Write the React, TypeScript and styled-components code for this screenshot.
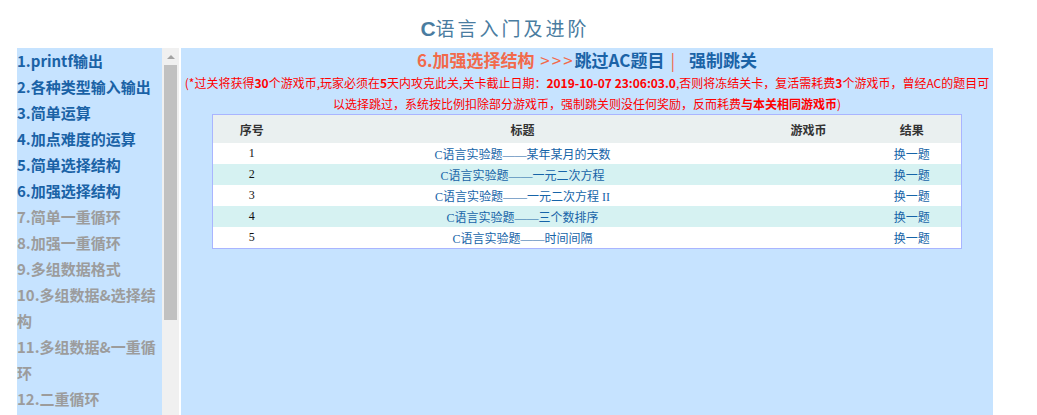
import React from "react";
import styled, { createGlobalStyle } from "styled-components";

const GlobalStyle = createGlobalStyle`
  html, body {
    margin: 0;
    padding: 0;
    overflow: hidden;
    background: #fff;
    font-family: "Noto Sans CJK SC", "Noto Sans", sans-serif;
  }
`;

interface iLevel {
  name: string;
  done: boolean;
}

interface iProblem {
  id: number;
  title: string;
}

const levels: iLevel[] = [
  { name: "1.printf输出", done: true },
  { name: "2.各种类型输入输出", done: true },
  { name: "3.简单运算", done: true },
  { name: "4.加点难度的运算", done: true },
  { name: "5.简单选择结构", done: true },
  { name: "6.加强选择结构", done: true },
  { name: "7.简单一重循环", done: false },
  { name: "8.加强一重循环", done: false },
  { name: "9.多组数据格式", done: false },
  { name: "10.多组数据&选择结构", done: false },
  { name: "11.多组数据&一重循环", done: false },
  { name: "12.二重循环", done: false },
];

const problems: iProblem[] = [
  { id: 1, title: "C语言实验题——某年某月的天数" },
  { id: 2, title: "C语言实验题——一元二次方程" },
  { id: 3, title: "C语言实验题——一元二次方程 II" },
  { id: 4, title: "C语言实验题——三个数排序" },
  { id: 5, title: "C语言实验题——时间间隔" },
];

const App = () => {
  return (
    <Page>
      <GlobalStyle />
      <Title>
        <b>C</b>语言入门及进阶
      </Title>
      <Layout>
        <Sidebar>
          <LevelList>
            {levels.map((lv) => (
              <LevelItem key={lv.name} done={lv.done}>
                {lv.name}
              </LevelItem>
            ))}
          </LevelList>
          <ScrollBar>
            <ScrollArrow />
            <ScrollThumb />
          </ScrollBar>
        </Sidebar>
        <Main>
          <Heading>
            <Current>6.加强选择结构</Current>
            <Arrows> &gt;&gt;&gt;</Arrows>
            <HeadLink>跳过AC题目</HeadLink>
            <Divider>|</Divider>
            <HeadLink>强制跳关</HeadLink>
          </Heading>
          <Notice>
            <NoticeLine>
              (*过关将获得<b>30</b>个游戏币,玩家必须在<b>5</b>天内攻克此关,关卡截止日期：
              <b>2019-10-07 23:06:03.0</b>,否则将冻结关卡，复活需耗费<b>3</b>
              个游戏币，曾经AC的题目可
            </NoticeLine>
            <NoticeLine>
              以选择跳过，系统按比例扣除部分游戏币，强制跳关则没任何奖励，反而耗费
              <b>与本关相同游戏币</b>)
            </NoticeLine>
          </Notice>
          <Table>
            <colgroup>
              <col style={{ width: 78 }} />
              <col style={{ width: 464 }} />
              <col style={{ width: 108 }} />
              <col style={{ width: 99 }} />
            </colgroup>
            <thead>
              <tr>
                <Th>序号</Th>
                <Th>标题</Th>
                <Th>游戏币</Th>
                <Th>结果</Th>
              </tr>
            </thead>
            <tbody>
              {problems.map((p, i) => (
                <Row key={p.id} alt={i % 2 === 1}>
                  <NumCell>{p.id}</NumCell>
                  <LinkCell>{p.title}</LinkCell>
                  <Td></Td>
                  <LinkCell>换一题</LinkCell>
                </Row>
              ))}
            </tbody>
          </Table>
        </Main>
      </Layout>
    </Page>
  );
};

export default App;

const Page = styled.div`
  width: 976px;
  padding-left: 17px;
`;

const Title = styled.div`
  height: 40px;
  padding-top: 8px;
  line-height: 40px;
  text-align: center;
  font-size: 19px;
  letter-spacing: 3px;
  color: #4a7ca0;
  b {
    font-family: "Liberation Sans", Arial, sans-serif;
    font-size: 21px;
    letter-spacing: 0;
  }
`;

const Layout = styled.div`
  display: flex;
  gap: 2px;
  height: calc(100vh - 48px);
`;

const Sidebar = styled.div`
  width: 162px;
  display: flex;
  flex-shrink: 0;
`;

const LevelList = styled.div`
  width: 145px;
  background-color: #c6e3ff;
  overflow: hidden;
`;

const LevelItem = styled.div<{ done: boolean }>`
  font-size: 15px;
  font-weight: 700;
  line-height: 26px;
  color: ${(p) => (p.done ? "#1a62a6" : "#9c9c9c")};
`;

const ScrollBar = styled.div`
  width: 17px;
  background-color: #f0f0f0;
  display: flex;
  flex-direction: column;
  align-items: center;
`;

const ScrollArrow = styled.div`
  height: 17px;
  width: 17px;
  display: flex;
  align-items: center;
  justify-content: center;
  &::after {
    content: "";
    border-left: 4px solid transparent;
    border-right: 4px solid transparent;
    border-bottom: 4px solid #a3a3a3;
  }
`;

const ScrollThumb = styled.div`
  width: 13px;
  height: 255px;
  background-color: #c1c1c1;
`;

const Main = styled.div`
  width: 812px;
  background-color: #c6e3ff;
`;

const Heading = styled.div`
  text-align: center;
  font-size: 17px;
  font-weight: 700;
  line-height: 24px;
  color: #1b63a7;
`;

const Current = styled.span`
  color: #f26a4b;
`;

const Arrows = styled.span`
  color: #f26a4b;
  letter-spacing: 2px;
  font-weight: 400;
`;

const HeadLink = styled.span`
  color: #1b63a7;
`;

const Divider = styled.span`
  color: #f26a4b;
  font-weight: 400;
  margin: 0 14px 0 6px;
`;

const Notice = styled.div`
  color: #ff0000;
  font-size: 12px;
  line-height: 21px;
  text-align: center;
  b {
    font-weight: 700;
  }
`;

const NoticeLine = styled.div`
  white-space: nowrap;
`;

const Table = styled.table`
  width: 749px;
  margin: 0 auto;
  border-collapse: collapse;
  border: 1px solid #a9b5ff;
  table-layout: fixed;
  font-size: 12px;
`;

const Th = styled.th`
  height: 28px;
  padding: 0;
  background-color: #eaf0f0;
  color: #333;
  font-weight: 700;
  text-align: center;
`;

const Row = styled.tr<{ alt: boolean }>`
  background-color: ${(p) => (p.alt ? "#d6f2f2" : "#fff")};
`;

const Td = styled.td`
  height: 21px;
  padding: 0;
  text-align: center;
`;

const NumCell = styled(Td)`
  font-family: "Liberation Serif", "Noto Sans CJK SC", serif;
  color: #111;
`;

const LinkCell = styled(Td)`
  color: #1664a8;
  font-family: "Liberation Serif", "Noto Sans CJK SC", serif;
`;
